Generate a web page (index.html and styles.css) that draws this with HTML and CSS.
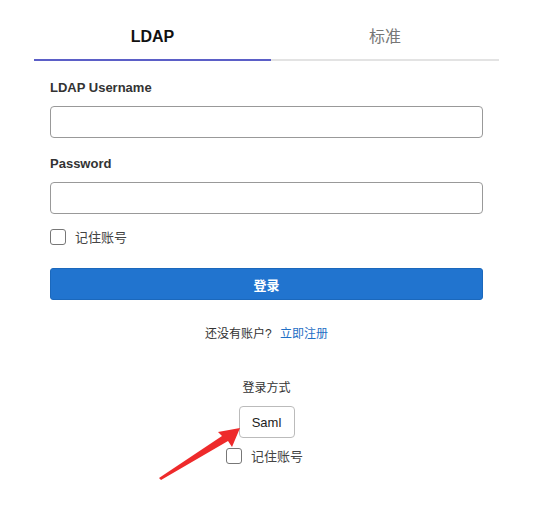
FILE: index.html
```html
<!DOCTYPE html>
<html lang="zh">
<head>
  <meta charset="UTF-8">
  <meta name="viewport" content="width=device-width, initial-scale=1.0">
  <title>登录</title>
  <link rel="stylesheet" href="styles.css">
</head>
<body>

<div class="login">
  <div class="tabs">
    <div class="tab active">LDAP</div>
    <div class="tab">标准</div>
  </div>

  <form class="form">
    <div class="form-group">
      <label for="username">LDAP Username</label>
      <input type="text" id="username">
    </div>
    <div class="form-group">
      <label for="password">Password</label>
      <input type="password" id="password">
    </div>
    <label class="check">
      <span class="box"></span>
      <span>记住账号</span>
    </label>
    <button type="button" class="submit">登录</button>
  </form>

  <p class="register">还没有账户? <a href="#">立即注册</a></p>

  <div class="other">
    <p class="other-title">登录方式</p>
    <button type="button" class="saml">Saml</button>
    <label class="check small">
      <span class="box"></span>
      <span>记住账号</span>
    </label>
  </div>
</div>

<!-- annotation arrow -->
<svg class="arrow" width="551" height="505" viewBox="0 0 551 505">
  <polygon points="159,478 222,436 218,432 240,428 232,447 228,441 161,480" fill="#ee2a2b"/>
</svg>

</body>
</html>
```

FILE: styles.css
```css
body {
  font-family: "Liberation Sans", "Noto Sans CJK SC", sans-serif;
  background-color: #ffffff;
  margin: 0;
  color: #222;
}
.login {
  width: 465px;
  margin-left: 34px;
  padding-top: 11px;
}
.tabs {
  display: flex;
  border-bottom: 2px solid #e3e3e3;
}
.tab {
  flex: 1;
  text-align: center;
  font-size: 16px;
  line-height: 22px;
  padding: 15px 0 11px;
  color: #777;
  margin-bottom: -2px;
  border-bottom: 2px solid transparent;
}
.tab.active {
  flex: 0 0 237px;
  color: #111;
  font-weight: bold;
  border-bottom-color: #5b5fc7;
}
.form {
  padding: 18px 16px 0;
}
.form-group {
  margin-bottom: 17px;
}
.form-group label {
  display: block;
  font-size: 13px;
  font-weight: bold;
  color: #333;
  line-height: 18px;
  margin-bottom: 9px;
}
.form-group input {
  display: block;
  width: 100%;
  height: 32px;
  box-sizing: border-box;
  border: 1px solid #999;
  border-radius: 4px;
  padding: 0 8px;
}
.check {
  display: flex;
  align-items: center;
  gap: 9px;
  font-size: 13px;
  color: #444;
  margin-top: -4px;
}
.box {
  width: 14px;
  height: 14px;
  border: 1px solid #777;
  border-radius: 3px;
}
.submit {
  display: block;
  width: 100%;
  height: 32px;
  margin-top: 22px;
  border: 1px solid #1b68bc;
  border-radius: 3px;
  background-color: #2174cf;
  color: #fff;
  font-family: inherit;
  font-size: 13px;
  font-weight: bold;
}
.register {
  text-align: center;
  font-size: 12px;
  margin: 24px 0 0;
  color: #333;
}
.register a {
  color: #1f6fc5;
  text-decoration: none;
  margin-left: 5px;
}
.other {
  display: flex;
  flex-direction: column;
  align-items: center;
  margin-top: 38px;
}
.other-title {
  margin: 0;
  font-size: 12px;
  line-height: 18px;
  color: #333;
}
.saml {
  margin-top: 9px;
  height: 32px;
  width: 56px;
  background: #fff;
  border: 1px solid #bbb;
  border-radius: 4px;
  font-family: inherit;
  font-size: 13px;
  color: #222;
}
.check.small {
  margin-top: 8px;
  margin-right: 4px;
}
.arrow {
  position: absolute;
  left: 0;
  top: 0;
  pointer-events: none;
}
```
